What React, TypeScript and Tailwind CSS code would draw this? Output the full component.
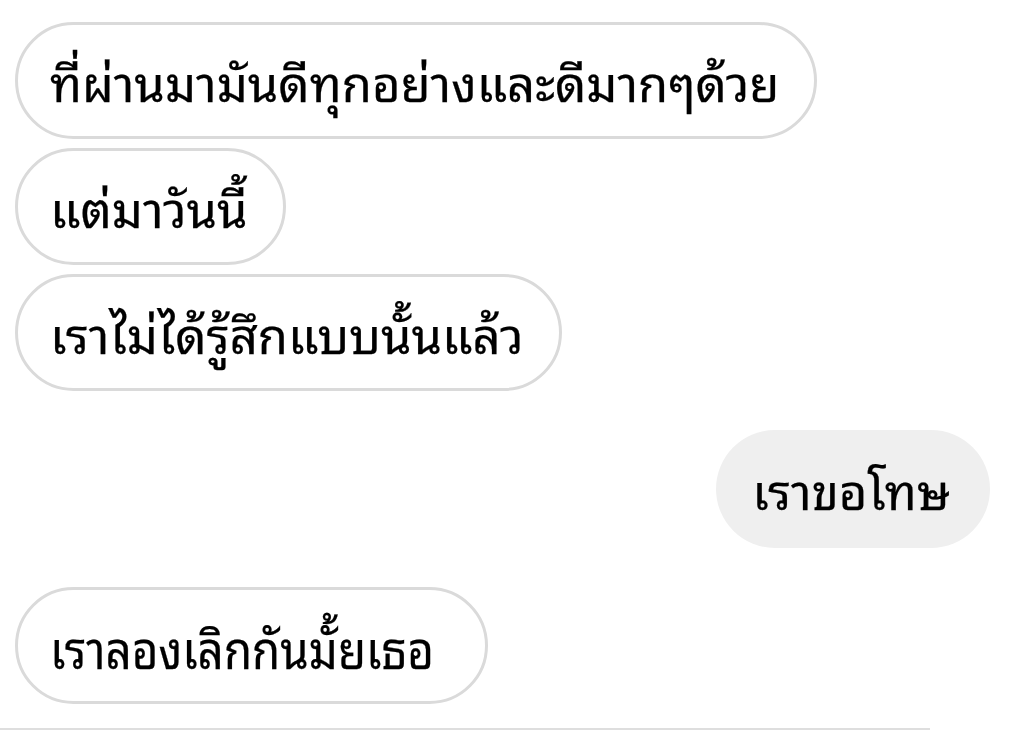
import React from 'react';

type Msg = { text: string; mine?: boolean; condensed?: boolean };

const messages: Msg[] = [
  { text: 'ที่ผ่านมามันดีทุกอย่างและดีมากๆด้วย' },
  { text: 'แต่มาวันนี้' },
  { text: 'เราไม่ได้รู้สึกแบบนั้นแล้ว' },
  { text: 'เราขอโทษ', mine: true },
  { text: 'เราลองเลิกกันมั้ยเธอ', condensed: true },
];

function Bubble({ text, mine, condensed }: Msg) {
  if (mine) {
    return (
      <div className="flex justify-end pr-[26px]">
        <div className="h-[118px] rounded-full bg-[#efefef] pl-[36px] pr-[40px] flex items-center">
          <span className="[-webkit-text-stroke:0.25px_black]">{text}</span>
        </div>
      </div>
    );
  }
  if (condensed) {
    return (
      <div className="flex">
        <div className="h-[117px] w-[473px] rounded-full border-[3px] border-[#dadada] bg-white pl-[32px] flex items-center overflow-hidden">
          <span className="text-[52px] origin-left scale-x-[0.88] whitespace-nowrap [-webkit-text-stroke:0.25px_black]">{text}</span>
        </div>
      </div>
    );
  }
  return (
    <div className="flex">
      <div className="h-[117px] rounded-full border-[3px] border-[#dadada] bg-white pl-[32px] pr-[35px] flex items-center">
        <span className="[-webkit-text-stroke:0.25px_black]">{text}</span>
      </div>
    </div>
  );
}

export default function App() {
  return (
    <div className="w-[1016px] h-[730px] bg-white overflow-hidden relative font-['Noto_Sans_Thai_Looped','Noto_Sans_Thai',sans-serif] font-normal text-[49px] text-black">
      <div className="flex flex-col pl-[15px] pt-[22px]">
        <div className="flex flex-col gap-[9px]">
          <Bubble {...messages[0]} />
          <Bubble {...messages[1]} />
          <Bubble {...messages[2]} />
        </div>
        <div className="mt-[39px]">
          <Bubble {...messages[3]} />
        </div>
        <div className="mt-[39px]">
          <Bubble {...messages[4]} />
        </div>
      </div>
      <div className="absolute left-0 bottom-0 w-[930px] h-[2px] bg-[#dedede]" />
    </div>
  );
}
